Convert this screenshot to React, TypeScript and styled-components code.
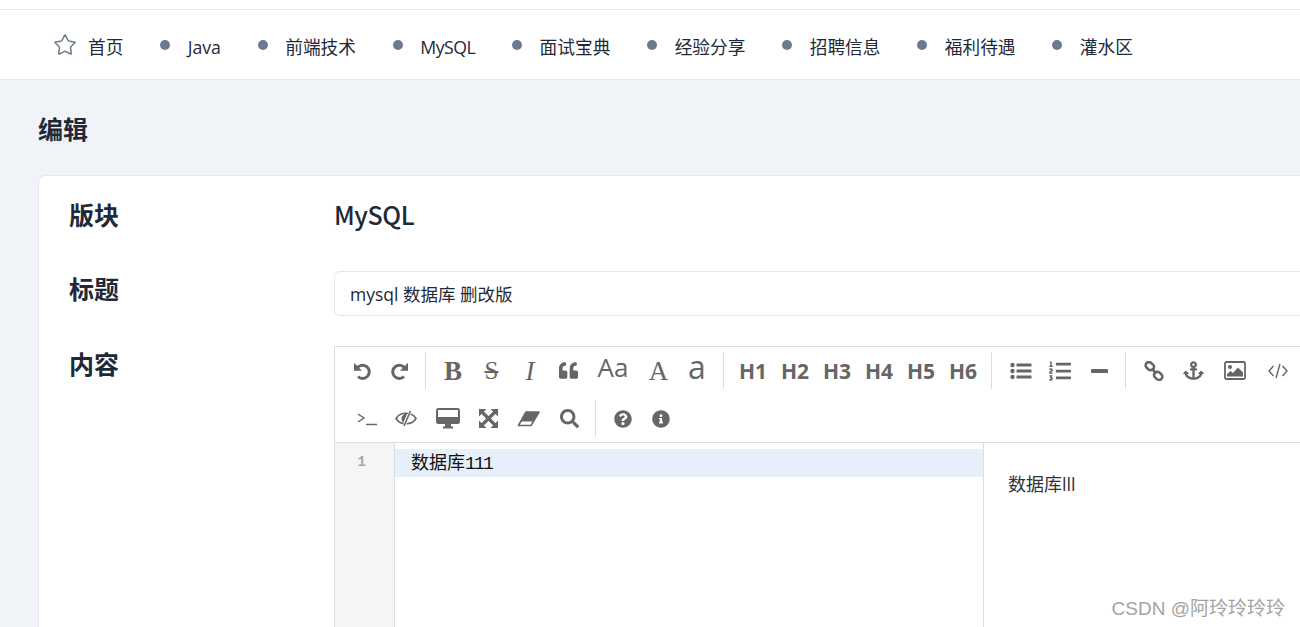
import React from 'react';
import styled, { createGlobalStyle } from 'styled-components';
import { Star } from 'lucide-react';
import { FaQuoteLeft, FaListOl, FaAnchor, FaSearch, FaQuestionCircle, FaInfoCircle } from 'react-icons/fa';

const GlobalStyle = createGlobalStyle`
  html, body {
    margin: 0;
    height: 627px;
    overflow: hidden;
    background: #f0f3f8;
    font-family: "Open Sans", "Noto Sans CJK SC", sans-serif;
    color: #1f2937;
  }
  * { box-sizing: border-box; }
`;

const Page = styled.div`
  position: relative;
  width: 1300px;
  height: 627px;
  overflow: hidden;
`;

const TopStrip = styled.div`
  height: 10px;
  background: #fff;
  border-bottom: 1px solid #e8e8e8;
`;

const Nav = styled.nav`
  height: 70px;
  background: #fff;
  border-bottom: 1px solid #e5e7eb;
  display: flex;
  align-items: center;
  padding: 4px 0 0 53px;
`;

const NavItem = styled.a<{ $narrow?: boolean }>`
  display: flex;
  align-items: center;
  font-size: 17.7px;
  line-height: 24px;
  color: #1f2937;
  margin-right: 36.8px;
  white-space: nowrap;
  letter-spacing: ${(p) => (p.$narrow ? '-0.5px' : '0')};
`;

const Dot = styled.span`
  width: 10px;
  height: 10px;
  border-radius: 50%;
  background: #6b7a90;
  margin-right: 17.5px;
  margin-top: -3px;
`;

const StarIcon = styled(Star)`
  color: #6b7a90;
  margin-right: 11px;
  margin-top: -4px;
`;

const Main = styled.main`
  padding: 0 0 0 38px;
`;

const Title = styled.h1`
  margin: 0;
  padding: 29px 0 26px;
  font-size: 25px;
  line-height: 40px;
  font-weight: 700;
  color: #1f2937;
`;

const Card = styled.section`
  width: 1400px;
  background: #fff;
  border: 1px solid #e5e7eb;
  border-radius: 8px;
  padding: 21px 30px 0;
`;

const FormRow = styled.div<{ $gap?: number }>`
  display: grid;
  grid-template-columns: 265px 1fr;
  margin-bottom: ${(p) => p.$gap ?? 30}px;
`;

const Label = styled.div`
  font-size: 25px;
  line-height: 36px;
  font-weight: 700;
  color: #1f2937;
`;

const Value = styled.div`
  font-family: "Noto Sans CJK SC", sans-serif;
  font-size: 25px;
  line-height: 35px;
  font-weight: 500;
  letter-spacing: -0.4px;
  color: #1f2937;
`;

const TextInput = styled.div`
  height: 45px;
  border: 1px solid #e5e7eb;
  border-radius: 6px;
  padding: 0 15px;
  font-size: 17.5px;
  line-height: 45px;
  color: #1f2937;
`;

const Editor = styled.div`
  height: 420px;
  border: 1px solid #ddd;
  display: flex;
  flex-direction: column;
`;

const Toolbar = styled.div`
  height: 96px;
  border-bottom: 1px solid #ddd;
  padding-left: 8px;
`;

const ToolRow = styled.div`
  display: flex;
  align-items: flex-start;
  height: 48px;
`;

const Tool = styled.span<{ $w?: number }>`
  display: flex;
  align-items: center;
  justify-content: center;
  flex: none;
  width: ${(p) => p.$w ?? 38}px;
  height: 37px;
  margin-top: 5px;
  color: #666;
  font-size: 20px;
`;

const ToolSep = styled.span<{ $l?: number; $r?: number }>`
  flex: none;
  width: 1px;
  height: 37px;
  margin: 5px ${(p) => p.$r ?? 8}px 0 ${(p) => p.$l ?? 8}px;
  background: #ddd;
`;

const SerifGlyph = styled.span<{ $italic?: boolean; $weight?: number }>`
  font-family: "Liberation Serif", serif;
  font-size: 27px;
  line-height: 30px;
  font-style: ${(p) => (p.$italic ? 'italic' : 'normal')};
  font-weight: ${(p) => p.$weight ?? 700};
`;

const StrikeBox = styled.span`
  padding: 0 3px;
  text-decoration: line-through;
  text-decoration-thickness: 1.5px;
  font-family: "Liberation Serif", serif;
  font-size: 25px;
  line-height: 30px;
`;

const SansGlyph = styled.span<{ $size?: number }>`
  font-family: "Open Sans", sans-serif;
  font-size: ${(p) => p.$size ?? 26}px;
  line-height: 30px;
  margin-top: -8px;
`;

const Heading = styled.span`
  font-family: "Open Sans", sans-serif;
  font-size: 21px;
  font-weight: 700;
`;

const HrBar = styled.span`
  width: 17px;
  height: 4px;
  background: #666;
  border-radius: 1px;
`;

const Panes = styled.div`
  flex: 1;
  display: flex;
`;

const Gutter = styled.div`
  width: 60px;
  flex: none;
  background: #f5f5f5;
  border-right: 1px solid #ddd;
  padding: 6px 28px 0 0;
  text-align: right;
  font-family: "Liberation Mono", monospace;
  font-size: 14px;
  font-weight: 700;
  line-height: 27px;
  color: #a8a8a8;
`;

const Source = styled.div`
  width: 588px;
  flex: none;
  padding-top: 6px;
`;

const ActiveLine = styled.div`
  height: 28px;
  background: #e6f0fb;
  padding-left: 16px;
  font-family: "Liberation Mono", monospace;
  font-size: 18px;
  letter-spacing: -1.8px;
  line-height: 25px;
  color: #111;
`;

const CodeCjk = styled.span`
  font-family: "Noto Sans CJK SC", sans-serif;
  letter-spacing: 0;
`;

const Preview = styled.div`
  flex: 1;
  border-left: 1px solid #ddd;
  padding: 27px 24px;
  font-size: 18px;
  line-height: 28px;
  color: #333;
`;

const Watermark = styled.div`
  position: absolute;
  right: 15px;
  bottom: 6px;
  font-family: "Liberation Sans", "Noto Sans CJK SC", sans-serif;
  font-size: 19px;
  line-height: 24px;
  color: #a3a3a3;
`;

const UndoIcon = ({ flip }: { flip?: boolean }) => (
  <svg width="20" height="20" viewBox="0 0 20 20" style={flip ? { transform: 'scaleX(-1)' } : undefined}>
    <path d="M5 7.500A6.600 6.600 0 1 1 6 15.500" fill="none" stroke="currentColor" strokeWidth="3" />
    <path d="M2 1.800v8h8z" fill="currentColor" />
  </svg>
);

const ListUlIcon = () => (
  <svg width="22" height="18" viewBox="0 0 22 18" fill="currentColor">
    <circle cx="2.500" cy="3" r="2.200" />
    <circle cx="2.500" cy="9" r="2.200" />
    <circle cx="2.500" cy="15" r="2.200" />
    <rect x="6.500" y="1.500" width="15" height="3" rx="0.600" />
    <rect x="6.500" y="7.500" width="15" height="3" rx="0.600" />
    <rect x="6.500" y="13.500" width="15" height="3" rx="0.600" />
  </svg>
);

const LinkIcon = () => (
  <svg width="20" height="20" viewBox="0 0 20 20" fill="none" stroke="currentColor" strokeWidth="2.600">
    <rect x="1.500" y="2" width="9" height="6.500" rx="3.200" transform="rotate(42 6 5)" />
    <rect x="9.500" y="11.500" width="9" height="6.500" rx="3.200" transform="rotate(42 14 15)" />
    <path d="M7.500 7.500l5 5" />
  </svg>
);

const ImageIcon = () => (
  <svg width="22" height="19" viewBox="0 0 22 19">
    <rect x="1" y="1" width="20" height="17" rx="1.500" fill="none" stroke="currentColor" strokeWidth="1.800" />
    <circle cx="6" cy="6" r="2" fill="currentColor" />
    <path d="M3 15.500v-2.500l3.500-3 2.500 2 5-5.500 5 5v4z" fill="currentColor" />
  </svg>
);

const CodeIcon = () => (
  <svg width="20" height="16" viewBox="0 0 20 16" fill="none" stroke="currentColor" strokeWidth="1.400">
    <path d="M5.500 3L1 8l4.500 5M14.500 3L19 8l-4.500 5M12 1L8 15" />
  </svg>
);

const TerminalIcon = () => (
  <svg width="20" height="14" viewBox="0 0 20 14" fill="none" stroke="currentColor" strokeWidth="1.400">
    <path d="M1 2l6 4-6 4M9 12.500h11" />
  </svg>
);

const EyeSlashIcon = () => (
  <svg width="22" height="17" viewBox="0 0 22 17" fill="none" stroke="currentColor">
    <path d="M1 8.500C5 1.500 17 1.500 21 8.500 17 15.500 5 15.500 1 8.500z" strokeWidth="1.600" />
    <path d="M12 4a4.500 4.500 0 0 0-5.500 4.500c0 1.500.6 3 2 4z" fill="currentColor" strokeWidth="0" />
    <path d="M15.500 1L9 16" stroke="#fff" strokeWidth="3" />
    <path d="M15.500 1L9 16" strokeWidth="1.600" />
  </svg>
);

const DesktopIcon = () => (
  <svg width="24" height="21" viewBox="0 0 24 21" fill="currentColor">
    <path d="M2.500 0h19A2.500 2.500 0 0 1 24 2.500v11a2.500 2.500 0 0 1-2.500 2.500h-19A2.500 2.500 0 0 1 0 13.500v-11A2.500 2.500 0 0 1 2.500 0zM2 2v7h20V2z" fillRule="evenodd" />
    <rect x="9" y="16" width="6" height="3" />
    <rect x="7" y="18.500" width="10" height="2" />
  </svg>
);

const ExpandIcon = () => (
  <svg width="19" height="19" viewBox="0 0 19 19" fill="currentColor">
    <path d="M0 0h7.500L0 7.500zM19 0v7.500L11.500 0zM0 19v-7.500L7.500 19zM19 19h-7.500L19 11.500z" />
    <path d="M3 3l13 13M16 3L3 16" stroke="currentColor" strokeWidth="3.200" />
  </svg>
);

const EraserIcon = () => (
  <svg width="23" height="16" viewBox="0 0 23 16">
    <path d="M9 1h13L14 14.500H1.500z" fill="#fff" stroke="currentColor" strokeWidth="1.600" strokeLinejoin="round" />
    <path d="M9 1h13l-5.500 9.500H4z" fill="currentColor" />
  </svg>
);

const navItems = ['Java', '前端技术', 'MySQL', '面试宝典', '经验分享', '招聘信息', '福利待遇', '灌水区'];
const headings = ['H1', 'H2', 'H3', 'H4', 'H5', 'H6'];

const App: React.FC = () => {
  return (
    <Page>
      <GlobalStyle />
      <TopStrip />
      <Nav>
        <NavItem>
          <StarIcon size={24} strokeWidth={1.5} />
          首页
        </NavItem>
        {navItems.map((item) => (
          <NavItem key={item} $narrow={item === 'MySQL'}>
            <Dot />
            {item}
          </NavItem>
        ))}
      </Nav>
      <Main>
        <Title>编辑</Title>
        <Card>
          <FormRow $gap={38}>
            <Label>版块</Label>
            <Value>MySQL</Value>
          </FormRow>
          <FormRow>
            <Label>标题</Label>
            <TextInput>mysql 数据库 删改版</TextInput>
          </FormRow>
          <FormRow>
            <Label>内容</Label>
            <Editor>
              <Toolbar>
                <ToolRow>
                  <Tool><UndoIcon /></Tool>
                  <Tool><UndoIcon flip /></Tool>
                  <ToolSep $l={6} />
                  <Tool><SerifGlyph $weight={700}>B</SerifGlyph></Tool>
                  <Tool $w={39}><StrikeBox>S</StrikeBox></Tool>
                  <Tool><SerifGlyph $italic $weight={400}>I</SerifGlyph></Tool>
                  <Tool><FaQuoteLeft size={19} /></Tool>
                  <Tool $w={52}><SansGlyph>Aa</SansGlyph></Tool>
                  <Tool $w={39}><SerifGlyph $weight={400}>A</SerifGlyph></Tool>
                  <Tool><SansGlyph $size={32}>a</SansGlyph></Tool>
                  <ToolSep $l={7} />
                  {headings.map((h) => (
                    <Tool key={h} $w={42}><Heading>{h}</Heading></Tool>
                  ))}
                  <ToolSep $l={7} $r={10} />
                  <Tool><ListUlIcon /></Tool>
                  <Tool $w={40}><FaListOl size={22} /></Tool>
                  <Tool><HrBar /></Tool>
                  <ToolSep $l={7} $r={9} />
                  <Tool><LinkIcon /></Tool>
                  <Tool $w={40}><FaAnchor size={21} /></Tool>
                  <Tool $w={44}><ImageIcon /></Tool>
                  <Tool $w={42}><CodeIcon /></Tool>
                </ToolRow>
                <ToolRow>
                  <Tool $w={47}><TerminalIcon /></Tool>
                  <Tool $w={32}><EyeSlashIcon /></Tool>
                  <Tool $w={52}><DesktopIcon /></Tool>
                  <Tool $w={28}><ExpandIcon /></Tool>
                  <Tool $w={52}><EraserIcon /></Tool>
                  <Tool $w={30}><FaSearch size={19} /></Tool>
                  <ToolSep $l={11} />
                  <Tool><FaQuestionCircle size={18} /></Tool>
                  <Tool><FaInfoCircle size={18} /></Tool>
                </ToolRow>
              </Toolbar>
              <Panes>
                <Gutter>1</Gutter>
                <Source>
                  <ActiveLine><CodeCjk>数据库</CodeCjk>111</ActiveLine>
                </Source>
                <Preview>数据库lll</Preview>
              </Panes>
            </Editor>
          </FormRow>
        </Card>
      </Main>
      <Watermark>CSDN @阿玲玲玲玲</Watermark>
    </Page>
  );
};

export default App;
